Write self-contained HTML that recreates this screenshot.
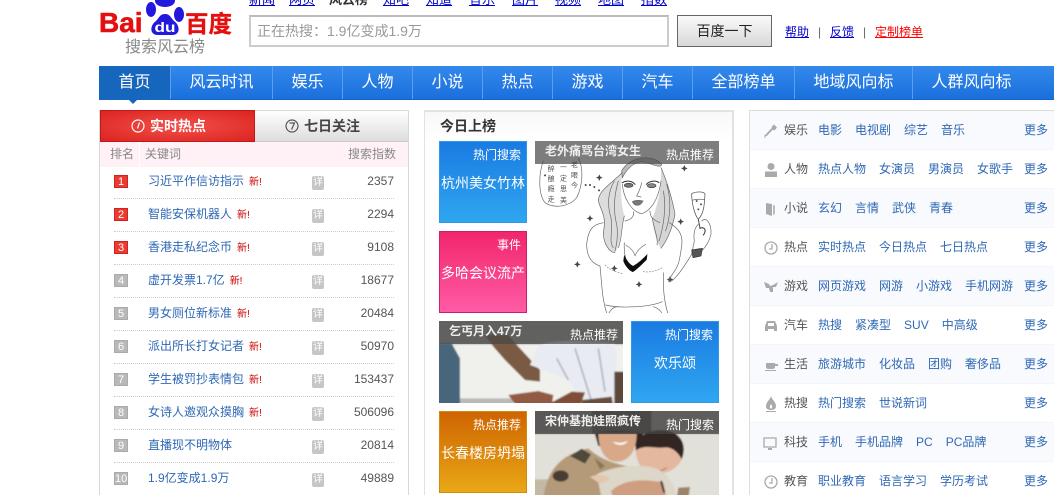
<!DOCTYPE html>
<html lang="zh">
<head>
<meta charset="utf-8">
<title>搜索风云榜</title>
<style>
*{box-sizing:border-box;margin:0;padding:0}
html,body{width:1054px;height:495px;overflow:hidden;background:#fff}
body{position:relative;font-family:"Liberation Sans","Noto Sans CJK SC",sans-serif;font-size:12px}
.a{position:absolute}
.top a{position:absolute;top:-7px;font-size:13px;line-height:14px;color:#00c;text-decoration:underline;white-space:nowrap}
.top b{position:absolute;top:-7px;font-size:13px;line-height:14px;color:#333;white-space:nowrap}
.nav{left:99px;top:66px;width:955px;height:34px;background:linear-gradient(#3389ec,#1a6fdc);border-bottom:1px solid #1565c8}
.nav span{position:absolute;top:0;height:33px;line-height:34px;text-align:center;color:#fff;font-size:16px;border-left:1px solid #5a9fee}
.nav span.on{background:#1766bd;border-left:0}
.hd{font-size:12px;color:#888;line-height:14px}
.row{position:absolute;left:114px;width:280px;height:33px;border-bottom:1px dotted #ccc}
.row:last-child{border:0}
.rk{position:absolute;left:0;top:9px;width:14px;height:13px;background:#b9b9b9;color:#fff;font-size:11px;line-height:13px;text-align:center;border:1px solid #aaa}
.rk.r{background:#ea3a34;border-color:#d0231f}
.kw{position:absolute;left:34px;top:8px;color:#2f68b5;line-height:15px;white-space:nowrap}
.kw i{font-style:normal;font-size:10px;color:#c00;margin-left:5px}
.xq{position:absolute;left:198px;top:10px;width:12px;height:14px;background:#c6c6c6;border-radius:2px;color:#fff;font-size:10px;line-height:14px;text-align:center}
.n{position:absolute;right:0;top:8px;color:#555;line-height:15px;font-size:12px}
.blk{position:absolute;width:88px;height:82px;color:#fff;border:1px solid}
.blk .t{position:absolute;right:5px;top:6px;line-height:15px;font-size:12px;white-space:nowrap}
.blk .m{position:absolute;left:0;right:0;top:33px;line-height:16px;font-size:14px;text-align:center;white-space:nowrap}
.blue{background:linear-gradient(#1a7be2,#2fa6f0);border-color:#2c9ae8}
.pink{background:linear-gradient(#f2266c,#ff5ba6);border-color:#c9206a}
.org{background:linear-gradient(#cf6400,#e8a817);border-color:#d18a10}
.pic{position:absolute;overflow:hidden;width:184px}
.pic svg{position:absolute;left:0;top:0}
.bar{position:absolute;left:0;top:0;width:184px;height:23px;background:rgba(70,70,70,.7)}
.bar b{position:absolute;left:10px;top:3px;font-size:12px;line-height:15px;color:#eee;white-space:nowrap;font-weight:bold}
.bar span{position:absolute;right:5px;top:7px;font-size:12px;line-height:15px;color:#fff;white-space:nowrap}
.rw{position:absolute;left:750px;width:304px;height:39px;border-bottom:1px solid #f3f5f8}
.rw.e{background:#f8fafd}
.rw svg{position:absolute;left:14px;top:12px}
.rw .l{position:absolute;left:34px;top:12px;color:#555;line-height:15px}
.rw .ls{position:absolute;left:68px;top:12px;line-height:15px;white-space:nowrap;color:#2f68b5}
.rw .ls span{margin-right:13px}
.rw .mo{position:absolute;left:274px;top:12px;line-height:15px;color:#2f68b5}
</style>
</head>
<body>
<!-- logo -->
<div class="a" style="left:99px;top:6px;font-size:28px;line-height:34px;font-weight:bold;color:#e60f0f;-webkit-text-stroke:.6px #e60f0f">Bai</div>
<svg class="a" style="left:146px;top:0" width="40" height="37" viewBox="0 0 40 37">
<ellipse cx="5" cy="9.500" rx="5" ry="7.500" fill="#2319dc"/>
<ellipse cx="19" cy="1" rx="10" ry="6" fill="#2319dc"/>
<ellipse cx="33" cy="14.500" rx="5" ry="7.500" fill="#2319dc"/>
<path d="M19 14C14 14 13 18 10 21C4 25 3 35 12 35C16 35 22 35 26 35C35 35 34 25 28 21C25 18 24 14 19 14Z" fill="#2319dc"/>
<text x="8.500" y="32" font-size="14" font-weight="bold" fill="#fff" font-family="Liberation Sans" textLength="21" lengthAdjust="spacingAndGlyphs">du</text>
</svg>
<div class="a" style="left:185px;top:9px;font-size:23.500px;line-height:30px;font-weight:bold;color:#e60f0f;white-space:nowrap;-webkit-text-stroke:.3px #e60f0f">百度</div>
<div class="a" style="left:125px;top:39px;font-size:16px;line-height:18px;color:#888;white-space:nowrap">搜索风云榜</div>

<!-- top links -->
<div class="top">
<a style="left:249px">新闻</a><a style="left:289px">网页</a><b style="left:329px">风云榜</b><a style="left:383px">知吧</a><a style="left:426px">知道</a><a style="left:469px">音乐</a><a style="left:512px">图片</a><a style="left:555px">视频</a><a style="left:598px">地图</a><a style="left:641px">指数</a>
</div>

<!-- search -->
<div class="a" style="left:249px;top:15px;width:420px;height:32px;border:2px solid #ccc;border-top-color:#bbb;background:#fff;color:#999;font-size:14px;line-height:29px;padding-left:6px;white-space:nowrap">正在热搜<span style='font-family:"Noto Sans CJK TC",sans-serif'>：</span>1.9亿变成1.9万</div>
<div class="a" style="left:677px;top:15px;width:95px;height:32px;border:1px solid #666;background:linear-gradient(#fafafa,#d8d8d8);color:#222;font-size:14px;line-height:30px;text-align:center">百度一下</div>
<div class="a" style="left:785px;top:25px;color:#00c;text-decoration:underline;line-height:15px">帮助</div>
<div class="a" style="left:818px;top:25px;color:#666;line-height:15px">|</div>
<div class="a" style="left:830px;top:25px;color:#00c;text-decoration:underline;line-height:15px">反馈</div>
<div class="a" style="left:863px;top:25px;color:#666;line-height:15px">|</div>
<div class="a" style="left:875px;top:25px;color:#f00;text-decoration:underline;line-height:15px;white-space:nowrap">定制榜单</div>

<!-- nav -->
<div class="a nav">
<span class="on" style="left:0;width:71px">首页</span>
<span style="left:71px;width:102px">风云时讯</span>
<span style="left:173px;width:70px">娱乐</span>
<span style="left:243px;width:70px">人物</span>
<span style="left:313px;width:70px">小说</span>
<span style="left:383px;width:70px">热点</span>
<span style="left:453px;width:70px">游戏</span>
<span style="left:523px;width:70px">汽车</span>
<span style="left:593px;width:102px">全部榜单</span>
<span style="left:695px;width:118px">地域风向标</span>
<span style="left:813px;width:118px">人群风向标</span>
</div>
<div class="a" style="left:129px;top:100px;width:0;height:0;border-left:4px solid transparent;border-right:4px solid transparent;border-top:4px solid #1766bd"></div>

<!-- left panel -->
<div class="a" style="left:99px;top:110px;width:310px;height:385px;border:1px solid #d8d8d8;border-bottom:0"></div>
<div class="a" style="left:100px;top:110px;width:155px;height:32px;background:radial-gradient(ellipse at center,#f2504a,#dc2320);border:1px solid #c11a1a;color:#fff;font-weight:bold;font-size:14px;line-height:30px;padding-left:49px">实时热点</div>
<svg class="a" style="left:131px;top:119px" width="14" height="14"><circle cx="7" cy="7" r="6" fill="none" stroke="#fff" stroke-width="1.200"/><path d="M8.500 3.500L6.500 9.500" stroke="#fff" stroke-width="1.200"/></svg>
<div class="a" style="left:255px;top:111px;width:153px;height:31px;background:linear-gradient(#fff,#ddd);border-bottom:1px solid #ccc;color:#444;font-weight:bold;font-size:14px;line-height:30px;padding-left:49px">七日关注</div>
<svg class="a" style="left:285px;top:119px" width="14" height="14"><circle cx="7" cy="7" r="6" fill="none" stroke="#555" stroke-width="1.200"/><path d="M4.500 4H9.500L6.500 10.500" fill="none" stroke="#555" stroke-width="1.200"/></svg>
<div class="a" style="left:100px;top:142px;width:308px;height:25px;background:#fff1f6"></div>
<div class="a" style="left:139px;top:142px;width:1px;height:25px;background:#fff"></div>
<div class="a hd" style="left:110px;top:147px">排名</div>
<div class="a hd" style="left:145px;top:147px">关键词</div>
<div class="a hd" style="left:348px;top:147px">搜索指数</div>

<div>
<div class="row" style="top:166px"><span class="rk r">1</span><span class="kw">习近平作信访指示<i>新!</i></span><span class="xq">详</span><span class="n">2357</span></div>
<div class="row" style="top:199px"><span class="rk r">2</span><span class="kw">智能安保机器人<i>新!</i></span><span class="xq">详</span><span class="n">2294</span></div>
<div class="row" style="top:232px"><span class="rk r">3</span><span class="kw">香港走私纪念币<i>新!</i></span><span class="xq">详</span><span class="n">9108</span></div>
<div class="row" style="top:265px"><span class="rk">4</span><span class="kw">虚开发票1.7亿<i>新!</i></span><span class="xq">详</span><span class="n">18677</span></div>
<div class="row" style="top:298px"><span class="rk">5</span><span class="kw">男女厕位新标准<i>新!</i></span><span class="xq">详</span><span class="n">20484</span></div>
<div class="row" style="top:331px"><span class="rk">6</span><span class="kw">派出所长打女记者<i>新!</i></span><span class="xq">详</span><span class="n">50970</span></div>
<div class="row" style="top:364px"><span class="rk">7</span><span class="kw">学生被罚抄表情包<i>新!</i></span><span class="xq">详</span><span class="n">153437</span></div>
<div class="row" style="top:397px"><span class="rk">8</span><span class="kw">女诗人邀观众摸胸<i>新!</i></span><span class="xq">详</span><span class="n">506096</span></div>
<div class="row" style="top:430px"><span class="rk">9</span><span class="kw">直播现不明物体</span><span class="xq">详</span><span class="n">20814</span></div>
<div class="row" style="top:463px"><span class="rk">10</span><span class="kw">1.9亿变成1.9万</span><span class="xq">详</span><span class="n">49889</span></div>
</div>

<!-- center panel -->
<div class="a" style="left:424px;top:110px;width:310px;height:385px;border:1px solid #e2e2e2;border-width:2px 2px 0 1px;background:linear-gradient(#f8f8f8,#fff 30px)"></div>
<div class="a" style="left:440px;top:118px;font-size:14px;font-weight:bold;color:#333;line-height:16px">今日上榜</div>

<div class="blk blue" style="left:439px;top:141px"><span class="t">热门搜索</span><span class="m">杭州美女竹林</span></div>
<div class="blk pink" style="left:439px;top:231px"><span class="t">事件</span><span class="m">多哈会议流产</span></div>

<div class="pic" style="left:535px;top:141px;height:172px;background:#fff">
<svg width="184" height="172" viewBox="0 0 552 516" fill="none" stroke="#666" stroke-width="2" stroke-linecap="round">
<defs><filter id="s1"><feGaussianBlur stdDeviation="0.8"/></filter><filter id="s2"><feGaussianBlur stdDeviation="2"/></filter></defs>
<g filter="url(#s1)">
<!-- thought bubble -->
<path d="M25 60C10 100 10 160 30 185C60 205 105 195 125 170C145 130 145 80 130 50" stroke="#666"/>
<g stroke="none" fill="#555" font-size="21">
<text x="108" y="78">老</text><text x="108" y="110">眼</text><text x="108" y="140">今</text>
<text x="75" y="85">一</text><text x="75" y="118">定</text><text x="75" y="150">思</text><text x="75" y="185">美</text>
<text x="38" y="90">醉</text><text x="38" y="120">酿</text><text x="38" y="150">瘾</text><text x="38" y="182">走</text>
</g>
<g fill="#444" stroke="none">
<circle cx="30" cy="103" r="3"/><circle cx="152" cy="132" r="3"/><circle cx="165" cy="132" r="3"/><circle cx="178" cy="138" r="3"/><circle cx="192" cy="148" r="3"/>
<path d="M193 100l3 7 7 3-7 3-3 7-3-7-7-3 7-3ZM165 222l3 7 7 3-7 3-3 7-3-7-7-3 7-3ZM127 360l3 7 7 3-7 3-3 7-3-7-7-3 7-3ZM238 372l3 7 7 3-7 3-3 7-3-7-7-3 7-3ZM312 420l3 7 7 3-7 3-3 7-3-7-7-3 7-3ZM437 232l3 7 7 3-7 3-3 7-3-7-7-3 7-3ZM448 72l3 7 7 3-7 3-3 7-3-7-7-3 7-3ZM405 405l3 7 7 3-7 3-3 7-3-7-7-3 7-3Z"/>
</g>
<!-- hair mass -->
<path d="M262 95C225 130 190 150 190 180C200 215 215 225 205 275C205 310 225 335 240 335C262 300 255 260 268 225C258 190 255 140 262 95Z" fill="#dcdcdc" stroke="none"/>
<path d="M378 80C400 130 415 190 420 220C410 270 395 300 378 322C362 300 355 260 352 232C370 190 380 140 378 80Z" fill="#d6d6d6" stroke="none"/>
<path d="M260 90C280 50 350 35 380 70C378 85 345 65 320 62C295 65 275 85 262 110Z" fill="#bbb" stroke="#666"/>
<path d="M262 95C225 130 190 150 190 180C200 215 215 225 205 275C205 310 225 335 240 335M238 120C220 150 215 190 228 230C235 270 220 300 235 320M250 120C235 170 235 210 245 250C250 280 245 310 240 330M378 80C400 130 415 190 420 220C410 270 395 300 378 322M395 130C410 180 405 230 392 270M385 150C395 200 385 260 372 300M268 225C258 260 262 290 250 320M352 232C358 270 370 290 366 312"/>
<!-- face -->
<path d="M262 130C265 165 285 210 320 218C345 210 370 180 378 120"/>
<path d="M262 125C272 118 290 118 300 130M334 130C345 118 365 118 372 125" stroke="#333" stroke-width="3"/>
<ellipse cx="281" cy="133" rx="13" ry="6" fill="#777" stroke="#333"/><ellipse cx="350" cy="134" rx="13" ry="6" fill="#888" stroke="#333"/>
<path d="M320 125C316 145 308 158 305 165L318 168"/>
<path d="M292 182C302 176 316 178 324 180C316 196 300 198 292 182Z" fill="#777"/>
<!-- neck & body -->
<path d="M295 212C298 225 290 235 270 240M345 210C345 225 350 235 375 245"/>
<path d="M205 245C175 250 160 262 155 310C155 340 165 365 195 375M195 375C200 420 200 470 215 516"/>
<path d="M403 245C430 262 445 280 440 315C435 350 432 375 415 395L400 420C410 430 440 390 470 340M385 395C385 440 385 470 398 516"/>
<path d="M268 305C266 335 272 365 290 385"/>
<path d="M268 345C276 362 286 372 294 376C310 368 322 356 336 342L334 356C322 368 305 386 293 392C282 388 270 372 266 360Z" fill="#111" stroke="#111"/>
<path d="M272 312C285 320 298 332 300 345C305 330 318 318 332 310" stroke="#777"/>
<path d="M210 372C222 385 240 392 262 398M325 392C345 395 365 390 385 378" stroke="#888" stroke-dasharray="4 5"/>
<path d="M212 492C250 502 340 500 382 482"/>
<path d="M222 516C230 500 240 497 250 497M355 497C368 500 378 510 380 516"/>
<!-- hand, watch, glass -->
<path d="M470 340L478 300C475 280 478 260 490 250M500 240C515 225 530 250 528 280C522 305 510 320 500 330"/>
<path d="M470 327L502 322L498 345L474 350Z" fill="#555" stroke="#333"/>
<path d="M470 158C485 150 505 152 510 158C508 190 508 215 490 235C478 220 470 185 470 158Z" stroke="#444"/>
<path d="M472 178C485 172 500 176 509 175" stroke="#666"/>
<g fill="#555" stroke="none"><circle cx="490" cy="205" r="3"/><circle cx="498" cy="190" r="3"/><circle cx="485" cy="180" r="3"/></g>
<path d="M490 235L495 262" stroke="#444" stroke-width="3"/>
<path d="M495 262C510 255 515 270 505 282" stroke="#333" stroke-width="3"/>
</g>
</svg>
<div class="bar"><b>老外痛骂台湾女生</b><span>热点推荐</span></div>
</div>

<div class="pic" style="left:439px;top:321px;height:82px;background:#eeeeea">
<svg width="184" height="82" viewBox="42 18 552 246">
<g filter="url(#s2)">
<rect x="32" y="8" width="570" height="266" fill="#f0f0ec"/>
<rect x="32" y="8" width="570" height="80" fill="#a0a09c"/>
<path d="M100 250L270 250L260 274H100Z" fill="#b9b9b5"/>
<path d="M32 85H80L105 130L105 274H32Z" fill="#47667c"/>
<path d="M180 60L250 60L280 95L345 165L345 200L300 195L240 135L205 95Z" fill="#7a5a42"/>
<path d="M340 90C385 75 470 75 570 85C578 130 575 200 568 274H480L430 195L370 170L315 150Z" fill="#e9ebf2"/>
<path d="M450 100L475 180L500 260M395 130L430 195M520 100L540 230" stroke="#b0b4c2" stroke-width="5" fill="none"/>
<path d="M250 240L340 228L385 240L380 274H275Z" fill="#925a42"/>
<path d="M380 262L440 230L480 232L465 274H380Z" fill="#7f4e38"/>
<path d="M470 255L560 245L565 274H470Z" fill="#6a5040"/>
<rect x="568" y="170" width="30" height="110" fill="#5c4a3a"/>
</g>
</svg>
<div class="bar"><b>乞丐月入47万</b><span>热点推荐</span></div>
</div>

<div class="blk blue" style="left:631px;top:321px"><span class="t">热门搜索</span><span class="m">欢乐颂</span></div>
<div class="blk org" style="left:439px;top:411px"><span class="t">热点推荐</span><span class="m">长春楼房坍塌</span></div>

<div class="pic" style="left:535px;top:411px;height:84px;background:#dcdad2">
<svg width="184" height="84" viewBox="0 0 552 252">
<g filter="url(#s2)">
<rect x="-10" y="-10" width="572" height="272" fill="#e2e1d9"/>
<rect x="-10" y="205" width="60" height="50" fill="#c4b9a4"/>
<rect x="-10" y="-10" width="180" height="79" fill="#8a8880"/>
<rect x="170" y="-10" width="180" height="79" fill="#55504c"/>
<rect x="350" y="-10" width="212" height="79" fill="#9a9890"/>
<path d="M180 70C190 55 310 55 325 70L315 105H190Z" fill="#2d2522"/>
<path d="M190 68H305C305 115 285 152 245 152C210 152 190 115 190 68Z" fill="#d8a888"/>
<path d="M233 92C250 98 265 96 278 90C272 104 245 106 233 92Z" fill="#fff"/>
<path d="M25 262C35 180 75 130 160 112C200 150 260 165 310 170L300 262Z" fill="#b59a7a"/>
<path d="M105 135L140 113L168 130L150 158Z" fill="#4f4a3a"/>
<ellipse cx="77" cy="195" rx="24" ry="17" fill="#473e32"/>
<path d="M178 140L210 165L195 175Z" fill="#8a7555"/>
<path d="M302 120C300 75 345 55 395 60C445 70 455 120 435 155C410 190 360 195 330 180C312 165 304 145 302 120Z" fill="#e3b89e"/>
<path d="M302 118C298 75 345 52 395 58C445 68 455 110 440 145C430 125 410 105 385 110C355 112 330 100 302 118Z" fill="#322824"/>
<path d="M330 170C345 185 375 185 395 170" stroke="#b07a60" stroke-width="3" fill="none"/>
<path d="M185 190C235 165 320 155 370 175C395 190 420 215 425 262H200Z" fill="#dcd7c8"/>
<path d="M165 198C185 188 215 190 225 205L195 218Z" fill="#e4c6ae"/>
<path d="M228 240C270 200 340 205 385 215L395 262H235Z" fill="#cf9e80"/>
<path d="M378 210L388 245" stroke="#333" stroke-width="6"/>
<path d="M430 230L465 228L460 262H425Z" fill="#9c8468"/>
</g>
</svg>
<div class="bar"><b>宋仲基抱娃照疯传</b><span>热门搜索</span></div>
</div>

<!-- right panel -->
<div class="a" style="left:749px;top:110px;width:305px;height:385px;border-top:2px solid #ddd;border-left:1px solid #ddd"></div>

<div class="rw e" style="top:111px"><svg width="14" height="16" viewBox="0 0 14 16"><path d="M2 12.500L8 6" stroke="#aaa" stroke-width="2" fill="none"/><path d="M1 15V12.500H3" stroke="#aaa" fill="none"/><path d="M8 3.500L10 1.500L13 4.500L10.500 7.500L7.500 6Z" fill="#aaa"/></svg><span class="l">娱乐</span><span class="ls"><span>电影</span><span>电视剧</span><span>综艺</span><span>音乐</span></span><span class="mo">更多</span></div>
<div class="rw" style="top:150px"><svg width="14" height="16" viewBox="0 0 14 16"><circle cx="7" cy="4.500" r="3.500" fill="#aaa"/><path d="M1 15V9.500H13V15Z" fill="#aaa"/></svg><span class="l">人物</span><span class="ls"><span>热点人物</span><span>女演员</span><span>男演员</span><span>女歌手</span></span><span class="mo">更多</span></div>
<div class="rw e" style="top:189px"><svg width="14" height="16" viewBox="0 0 14 16"><path d="M2 2L8 3V15L2 13Z" fill="#aaa"/><path d="M9 4L11 4.500V13L9 14Z" fill="#bbb"/></svg><span class="l">小说</span><span class="ls"><span>玄幻</span><span>言情</span><span>武侠</span><span>青春</span></span><span class="mo">更多</span></div>
<div class="rw" style="top:228px"><svg width="14" height="16" viewBox="0 0 14 16"><circle cx="7" cy="8" r="6" fill="none" stroke="#aaa" stroke-width="1.300"/><path d="M8 4V9H5" fill="none" stroke="#aaa" stroke-width="1.300"/></svg><span class="l">热点</span><span class="ls"><span>实时热点</span><span>今日热点</span><span>七日热点</span></span><span class="mo">更多</span></div>
<div class="rw e" style="top:267px"><svg width="14" height="16" viewBox="0 0 14 16"><path d="M0 3L5 5L6 7L9 6L14 3L12 8L9 8L9 13L6 13L5 9L2 9Z" fill="#aaa"/></svg><span class="l">游戏</span><span class="ls"><span>网页游戏</span><span>网游</span><span>小游戏</span><span>手机网游</span></span><span class="mo">更多</span></div>
<div class="rw" style="top:306px"><svg width="14" height="16" viewBox="0 0 14 16"><path d="M3 3H11L13 8V13H10V11H4V13H1V8Z" fill="#aaa"/><path d="M4 5H10V8H4Z" fill="#fff"/></svg><span class="l">汽车</span><span class="ls"><span>热搜</span><span>紧凑型</span><span>SUV</span><span>中高级</span></span><span class="mo">更多</span></div>
<div class="rw e" style="top:345px"><svg width="14" height="16" viewBox="0 0 14 16"><path d="M2 6H11V10C11 12 9 12 7 12C4 12 2 12 2 10ZM1 13H12V14H1ZM11 7H14V9H11Z" fill="#aaa"/></svg><span class="l">生活</span><span class="ls"><span>旅游城市</span><span>化妆品</span><span>团购</span><span>奢侈品</span></span><span class="mo">更多</span></div>
<div class="rw" style="top:384px"><svg width="14" height="16" viewBox="0 0 14 16"><path d="M7 0C8 4 12 6 12 10C12 13 10 14 7 14C4 14 2 13 2 10C2 6 6 4 7 0ZM2 15H12V16H2Z" fill="#aaa"/><path d="M7 8C8 10 9 11 7 13C5 11 6 10 7 8Z" fill="#fff"/></svg><span class="l">热搜</span><span class="ls"><span>热门搜索</span><span>世说新词</span></span><span class="mo">更多</span></div>
<div class="rw e" style="top:423px"><svg width="14" height="16" viewBox="0 0 14 16" style="left:13px"><path d="M1 3H13V12H1Z" fill="none" stroke="#aaa" stroke-width="1.300"/><path d="M5 14H9" stroke="#aaa" stroke-width="2"/></svg><span class="l">科技</span><span class="ls"><span>手机</span><span>手机品牌</span><span>PC</span><span>PC品牌</span></span><span class="mo">更多</span></div>
<div class="rw" style="top:462px;border:0"><svg width="14" height="16" viewBox="0 0 14 16"><circle cx="7" cy="8" r="6" fill="none" stroke="#aaa" stroke-width="1.300"/><path d="M8 4V9H5" fill="none" stroke="#aaa" stroke-width="1.300"/></svg><span class="l">教育</span><span class="ls"><span>职业教育</span><span>语言学习</span><span>学历考试</span></span><span class="mo">更多</span></div>
</body>
</html>
